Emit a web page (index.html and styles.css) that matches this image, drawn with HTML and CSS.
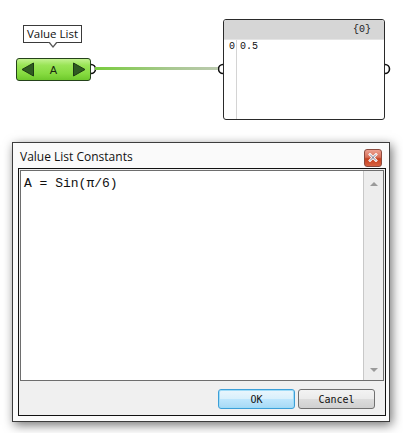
FILE: index.html
```html
<!DOCTYPE html>
<html>
<head>
<meta charset="utf-8">
<link rel="stylesheet" href="styles.css">
</head>
<body>
<div class="canvas">
  <div class="tooltip">Value List<span class="tip-arrow"></span></div>

  <div class="vlist">
    <svg class="arrow" width="14" height="15" viewBox="0 0 14 15"><polygon points="12.5,1 12.5,14 1,7.5" fill="#2f5a22" stroke="#1d3a14" stroke-width="1"/></svg>
    <span class="vlist-label">A</span>
    <svg class="arrow" width="14" height="15" viewBox="0 0 14 15"><polygon points="1.5,1 1.5,14 13,7.5" fill="#2f5a22" stroke="#1d3a14" stroke-width="1"/></svg>
  </div>
  <svg class="port port-out-vl" width="8" height="12" viewBox="0 0 8 12"><path d="M1 1.5 A4.5 4.5 0 0 1 1 10.5" fill="#fff" stroke="#111" stroke-width="1.6"/></svg>

  <div class="wire"></div>

  <svg class="port port-in-panel" width="6" height="12" viewBox="0 0 6 12"><path d="M5 1.5 A4.5 4.5 0 0 0 5 10.5" fill="#fff" stroke="#111" stroke-width="1.6"/></svg>
  <div class="panel">
    <div class="panel-head"><span class="panel-path">{0}</span></div>
    <div class="panel-body">
      <div class="panel-idx">0</div>
      <div class="panel-val">0.5</div>
    </div>
  </div>
  <svg class="port port-out-panel" width="8" height="12" viewBox="0 0 8 12"><path d="M1 1.5 A4.5 4.5 0 0 1 1 10.5" fill="#fff" stroke="#111" stroke-width="1.6"/></svg>
</div>

<div class="dialog">
  <div class="titlebar">
    <span class="title">Value List Constants</span>
    <span class="close"><svg width="10" height="9" viewBox="0 0 10 9"><path d="M2 1.5 L8 7.5 M8 1.5 L2 7.5" stroke="#fff" stroke-width="2.6" stroke-linecap="square"/><path d="M2 1.5 L8 7.5 M8 1.5 L2 7.5" stroke="#4a4a6a" stroke-width="0.8"/></svg></span>
  </div>
  <div class="client">
    <div class="editor">
      <div class="text">A = Sin(π/6)</div>
      <div class="scrollbar">
        <span class="sb-up"></span>
        <span class="sb-down"></span>
      </div>
    </div>
    <div class="buttons">
      <button class="btn btn-ok">OK</button>
      <button class="btn">Cancel</button>
    </div>
  </div>
</div>
</body>
</html>
```
FILE: styles.css
```css
html, body {
  margin: 0;
  padding: 0;
}
body {
  width: 403px;
  height: 433px;
  background: #fff;
  position: relative;
  overflow: hidden;
  font-family: "Liberation Sans", Arial, sans-serif;
}
.canvas {
  position: absolute;
  left: 0;
  top: 0;
  width: 403px;
  height: 130px;
}
.tooltip {
  position: absolute;
  left: 23px;
  top: 25px;
  width: 57px;
  height: 16px;
  border: 1px solid #3a3a3a;
  background: #fff;
  font-family: "Open Sans", sans-serif;
  font-size: 11.5px;
  line-height: 16px;
  text-align: center;
  color: #111;
  box-sizing: content-box;
}
.tip-arrow {
  position: absolute;
  left: 24px;
  top: 16px;
  width: 0;
  height: 0;
  border-left: 5px solid transparent;
  border-right: 5px solid transparent;
  border-top: 6px solid #555;
}
.tip-arrow::after {
  content: "";
  position: absolute;
  left: -4px;
  top: -7px;
  border-left: 4px solid transparent;
  border-right: 4px solid transparent;
  border-top: 5px solid #fff;
}
.vlist {
  position: absolute;
  left: 16px;
  top: 58px;
  width: 75px;
  height: 23px;
  border: 1px solid #24421a;
  border-radius: 3px;
  background: linear-gradient(#c2f290 0%, #99e456 30%, #86db40 70%, #6ec82c 100%);
  display: flex;
  align-items: center;
  justify-content: space-between;
  padding: 0 4px;
  box-sizing: border-box;
}
.vlist .arrow {
  display: block;
}
.vlist-label {
  font-family: "Liberation Sans", sans-serif;
  font-size: 11px;
  color: #1a2a10;
}
.port {
  position: absolute;
  display: block;
}
.port-out-vl {
  left: 90px;
  top: 63px;
}
.wire {
  position: absolute;
  left: 95px;
  top: 67px;
  width: 125px;
  height: 3px;
  background: linear-gradient(to right, #78cc3c, #a8c890 60%, #bccab0);
}
.port-in-panel {
  left: 218px;
  top: 63px;
}
.panel {
  position: absolute;
  left: 223px;
  top: 19px;
  width: 160px;
  height: 99px;
  border: 1px solid #2a2a2a;
  border-radius: 3px;
  background: #fff;
  overflow: hidden;
  box-sizing: content-box;
}
.panel-head {
  height: 19px;
  background: #d6d6d6;
  display: flex;
  justify-content: flex-end;
  align-items: center;
  padding-right: 13px;
  border-bottom: 1px solid #e4e4e4;
}
.panel-path {
  font-family: "Liberation Mono", monospace;
  font-size: 10px;
  color: #222;
}
.panel-body {
  display: flex;
  height: 80px;
  font-family: "Liberation Mono", monospace;
  font-size: 10px;
  color: #111;
}
.panel-idx {
  width: 13px;
  padding-left: 5px;
  border-right: 1px solid #d4d4d4;
  padding-top: 1px;
  box-sizing: border-box;
}
.panel-val {
  padding-left: 3px;
  padding-top: 1px;
}
.port-out-panel {
  left: 384px;
  top: 63px;
}

.dialog {
  position: absolute;
  left: 12px;
  top: 142px;
  width: 378px;
  height: 280px;
  border: 1px solid #3c3c3c;
  background: #fafafa;
  box-shadow: 2px 3px 10px rgba(0, 0, 0, 0.55);
  display: flex;
  flex-direction: column;
  padding: 0 3px 5px 5px;
  box-sizing: border-box;
}
.titlebar {
  height: 25px;
  display: flex;
  align-items: center;
  justify-content: space-between;
  padding-left: 2px;
  flex: none;
}
.title {
  font-family: "Open Sans", sans-serif;
  font-size: 12px;
  color: #111;
  padding-top: 2px;
}
.close {
  width: 16px;
  height: 16px;
  margin-right: 4px;
  margin-top: 4px;
  border: 1px solid #8c4a3e;
  border-radius: 3px;
  background: linear-gradient(#eca090 0%, #d8705a 45%, #c4401e 55%, #d86040 100%);
  display: flex;
  align-items: center;
  justify-content: center;
}
.close svg {
  display: block;
}
.client {
  flex: 1;
  border: 1px solid #111;
  background: #f0f0f0;
  display: flex;
  flex-direction: column;
  padding: 1px;
}
.editor {
  height: 209px;
  flex: none;
  border: 1px solid #6e6e6e;
  background: #fff;
  display: flex;
}
.text {
  flex: 1;
  border-right: 1px solid #c8c8c8;
  font-family: "Liberation Mono", "Courier New", monospace;
  font-size: 13px;
  color: #111;
  padding: 5px 0 0 3px;
}
.scrollbar {
  width: 19px;
  background: #ededed;
  display: flex;
  flex-direction: column;
  justify-content: space-between;
  align-items: center;
  padding: 11px 0 8px;
}
.sb-up {
  width: 0;
  height: 0;
  border-left: 4px solid transparent;
  border-right: 4px solid transparent;
  border-bottom: 4px solid #9a9a9a;
}
.sb-down {
  width: 0;
  height: 0;
  border-left: 4px solid transparent;
  border-right: 4px solid transparent;
  border-top: 4px solid #9a9a9a;
}
.buttons {
  flex: 1;
  display: flex;
  justify-content: flex-end;
  align-items: flex-start;
  gap: 3px;
  padding: 8px 9px 0 0;
}
.btn {
  width: 77px;
  height: 20px;
  margin: 0;
  border: 1px solid #707070;
  border-radius: 3px;
  background: linear-gradient(#f3f3f3 0%, #ebebeb 48%, #dcdcdc 52%, #d0d0d0 100%);
  font-family: "DejaVu Sans Mono", monospace;
  font-size: 10px;
  color: #111;
  padding: 0;
}
.btn-ok {
  border-color: #3c9fd8;
  box-shadow: inset 0 0 0 1px #9fdcf8;
  background: linear-gradient(#eaf6fd 0%, #d9f0fc 48%, #bee6fd 52%, #a7d9f5 100%);
}
```
